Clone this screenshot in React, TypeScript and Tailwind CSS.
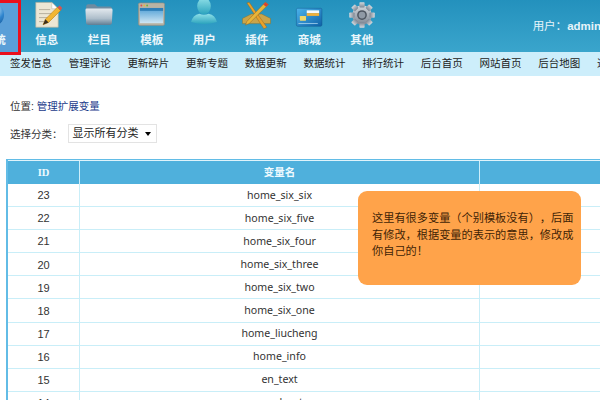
const font = "font-['Liberation_Sans','Noto_Sans_CJK_SC',sans-serif]";

function Globe() {
  return (
    <svg width="34" height="34" viewBox="0 0 44 44">
      <defs>
        <radialGradient id="gl" cx="0.6" cy="0.3" r="0.8">
          <stop offset="0" stopColor="#cfe8f8" />
          <stop offset="0.5" stopColor="#2f86cf" />
          <stop offset="1" stopColor="#12508f" />
        </radialGradient>
      </defs>
      <circle cx="20" cy="19" r="15" fill="url(#gl)" />
      <path d="M14 8c5-3 10-2 12 1-3 3-6 1-8 4-2 2-5 1-4-5z" fill="#e8f4fb" opacity="0.75" />
    </svg>
  );
}

function Note() {
  return (
    <svg width="32" height="32" viewBox="0 0 40 40">
      <path d="M6 3h20l8 8v23H6z" fill="#ece6d4" stroke="#b9b19b" strokeWidth="0.8" />
      <path d="M26 3v8h8z" fill="#fff" stroke="#b9b19b" strokeWidth="0.6" />
      <path d="M10 12h14M10 17h18M10 22h14M10 27h10" stroke="#b5ad9c" strokeWidth="1.2" />
      <path d="M15 31l3-7 15-15 4 4-15 15z" fill="#f2b632" stroke="#b57c10" strokeWidth="0.7" />
      <path d="M33 9l3-2 3 3-2 3z" fill="#d9534f" />
      <path d="M15 31l3-7 4 4z" fill="#3c3020" />
    </svg>
  );
}

function Folder() {
  return (
    <svg width="30" height="30" viewBox="0 0 42 42">
      <defs>
        <linearGradient id="fo" x1="0" y1="0" x2="0" y2="1">
          <stop offset="0" stopColor="#e3e9ee" />
          <stop offset="0.6" stopColor="#aebecb" />
          <stop offset="1" stopColor="#5f7d93" />
        </linearGradient>
      </defs>
      <path d="M3 9q0-3 3-3h9l4 3h17q3 0 3 3v20q0 2-2 2H5q-2 0-2-2z" fill="#6f8ba0" />
      <path d="M2 14q0-2 2-2h34q2 0 2 2l-1 18q0 3-3 3H6q-3 0-3-3z" fill="url(#fo)" />
    </svg>
  );
}

function Win() {
  return (
    <svg width="29" height="29" viewBox="0 0 40 40">
      <defs>
        <linearGradient id="wi" x1="0" y1="0" x2="0" y2="1">
          <stop offset="0" stopColor="#4f9fd6" />
          <stop offset="1" stopColor="#cfe6f3" />
        </linearGradient>
      </defs>
      <rect x="2" y="4" width="36" height="31" rx="2" fill="#b9b3a4" stroke="#8d8a80" strokeWidth="0.8" />
      <circle cx="6" cy="7.5" r="1.3" fill="#d9534f" />
      <circle cx="10" cy="7.5" r="1.3" fill="#e8b93c" />
      <circle cx="14" cy="7.5" r="1.3" fill="#6cb33f" />
      <rect x="4" y="11" width="32" height="21" fill="url(#wi)" />
      <rect x="4" y="11" width="32" height="4" fill="#2f7fb8" />
    </svg>
  );
}

function Person() {
  return (
    <svg width="32" height="32" viewBox="0 0 42 42">
      <defs>
        <linearGradient id="pe" x1="0" y1="0" x2="0" y2="1">
          <stop offset="0" stopColor="#8fe0e8" />
          <stop offset="1" stopColor="#2ba3bd" />
        </linearGradient>
      </defs>
      <ellipse cx="21" cy="8" rx="9" ry="11" fill="url(#pe)" />
      <path d="M4 29q2-9 11-11q6 3 12 0q9 2 11 11q-17 5-34 0z" fill="url(#pe)" />
    </svg>
  );
}

function Tools() {
  return (
    <svg width="31" height="31" viewBox="0 0 42 42">
      <path d="M2 25l12-6h14l12 6v7H2z" fill="#c9a44a" stroke="#8b6f24" strokeWidth="0.6" />
      <path d="M8 4l3-1 24 34-4 2z" fill="#e8a22c" stroke="#94621a" strokeWidth="0.6" />
      <path d="M33 3l4 3-26 26-5 2 2-5z" fill="#e8b53a" stroke="#94621a" strokeWidth="0.6" />
      <path d="M33 3l4 3-3 3-4-3z" fill="#d8432f" />
    </svg>
  );
}

function Card() {
  return (
    <svg width="29" height="29" viewBox="0 0 42 42">
      <defs>
        <linearGradient id="ca" x1="0" y1="0" x2="1" y2="1">
          <stop offset="0" stopColor="#4cb4ec" />
          <stop offset="1" stopColor="#0f62a8" />
        </linearGradient>
      </defs>
      <rect x="2" y="12" width="37" height="26" rx="2" fill="url(#ca)" stroke="#0b4d86" strokeWidth="0.6" />
      <rect x="17" y="15" width="18" height="4" fill="#f4f8fb" />
      <rect x="17" y="19" width="18" height="4" fill="#f2b13a" />
      <rect x="7" y="23" width="9" height="7" rx="1" fill="#efd86a" />
      <path d="M5 34h28" stroke="#bfe3f7" strokeWidth="1" />
    </svg>
  );
}

function Gear() {
  return (
    <svg width="30" height="30" viewBox="0 0 40 40">
      <defs>
        <linearGradient id="ge" x1="0" y1="0" x2="0" y2="1">
          <stop offset="0" stopColor="#d4d8dd" />
          <stop offset="1" stopColor="#7d8794" />
        </linearGradient>
      </defs>
      <g fill="url(#ge)">
        <circle cx="20" cy="20" r="13" />
        {[0, 45, 90, 135, 180, 225, 270, 315].map((a) => (
          <rect key={a} x="16.5" y="3" width="7" height="7" rx="1" transform={`rotate(${a} 20 20)`} />
        ))}
      </g>
      <circle cx="20" cy="20" r="6.5" fill="#4d5560" />
      <circle cx="20" cy="20" r="4.5" fill="#8f99a5" />
    </svg>
  );
}

const navItems = [
  { label: "系统", icon: <Globe /> },
  { label: "信息", icon: <Note /> },
  { label: "栏目", icon: <Folder /> },
  { label: "模板", icon: <Win /> },
  { label: "用户", icon: <Person /> },
  { label: "插件", icon: <Tools /> },
  { label: "商城", icon: <Card /> },
  { label: "其他", icon: <Gear /> },
];

const subItems = ["签发信息", "管理评论", "更新碎片", "更新专题", "数据更新", "数据统计", "排行统计", "后台首页", "网站首页", "后台地图"];

const rows = [
  ["23", "home_six_six"],
  ["22", "home_six_five"],
  ["21", "home_six_four"],
  ["20", "home_six_three"],
  ["19", "home_six_two"],
  ["18", "home_six_one"],
  ["17", "home_liucheng"],
  ["16", "home_info"],
  ["15", "en_text"],
  ["14", "en_about"],
];

export default function App() {
  return (
    <div className={`relative w-[600px] h-[400px] overflow-hidden bg-white ${font}`}>
      <header className="h-[52px] flex justify-between bg-gradient-to-b from-[#2391bd] to-[#3aa5cc]">
        <nav className="flex -ml-[32px]">
          {navItems.map((n, i) => (
            <div
              key={n.label}
              className={`relative w-[52.5px] h-[52px] flex flex-col items-center shrink-0 ${i === 0 ? "bg-[#5a9fd8]" : ""}`}
            >
              <div className="h-[33px] flex items-start justify-center">{n.icon}</div>
              <span className="text-[11.5px] leading-[14px] font-bold text-[#eaf6fb] whitespace-nowrap">{n.label}</span>
              {i === 0 && <div className="absolute top-0 left-0 right-0 h-[55px] border-[3px] border-[#ea0f1c] z-10" />}
            </div>
          ))}
        </nav>
        <div className="pt-[19px] text-[11.5px] leading-[14px] text-[#e6f4fa] whitespace-nowrap -mr-[1px]">
          用户：<b>admin</b>
        </div>
      </header>
      <div className="h-[24px] flex items-center pl-[10px] gap-[16.2px] bg-[#cdeefb] text-[10.5px] text-[#222] whitespace-nowrap">
        {subItems.map((s) => (
          <span key={s} className="w-[42.5px] shrink-0">{s}</span>
        ))}
        <span>退出登录</span>
      </div>
      <div className="pl-[10px] pt-[22px] text-[10.5px] leading-[16px] text-[#333]">
        位置: <span className="text-[#1a3a8a]">管理扩展变量</span>
      </div>
      <div className="pl-[10px] pt-[10px] flex items-center text-[10.5px] text-[#333]">
        <span>选择分类：</span>
        <div className="ml-[5px] mb-[3px] w-[89px] h-[19px] border border-[#e3e3e3] flex items-center justify-between pl-[4px] pr-[5px] text-[11px] text-[#222]">
          <span>显示所有分类</span>
          <span className="w-0 h-0 border-x-[3.5px] border-x-transparent border-t-[4px] border-t-black" />
        </div>
      </div>
      <div className="mt-[13px] ml-[6px] w-[620px] border-l-2 border-t border-[#62bce6]">
        <div className="h-[24px] flex bg-[#4fb0dc] text-[10.5px] font-bold text-[#eefaff] border-t border-[#dff3fb]">
          <div className="w-[72px] flex items-center justify-center border-r border-[#cdeefb] font-['Liberation_Serif','Noto_Sans_CJK_SC',serif]">ID</div>
          <div className="w-[400px] flex items-center justify-center border-r border-[#cdeefb]">变量名</div>
          <div className="flex-1" />
        </div>
        {rows.map(([id, name]) => (
          <div key={id} className="h-[23.1px] flex border-b border-[#c9eef8] text-[11px] text-[#333]">
            <div className="w-[72px] flex items-center justify-center pt-[1px] border-r border-[#c9eef8]">{id}</div>
            <div className="w-[400px] flex items-center justify-center pt-[1px] border-r border-[#c9eef8] font-['Noto_Sans',sans-serif] text-[10.6px]">{name}</div>
            <div className="flex-1" />
          </div>
        ))}
      </div>
      <div className="absolute left-[358px] top-[191px] w-[223px] h-[94px] rounded-[9px] bg-[#ffa34a] pl-[14px] pr-[6px] pt-[19px] text-[11.2px] leading-[16.5px] text-[#3f2406] [text-spacing-trim:space-all]">
        这里有很多变量（个别模板没有），后面有修改，根据变量的表示的意思，修改成你自己的！
      </div>
    </div>
  );
}
